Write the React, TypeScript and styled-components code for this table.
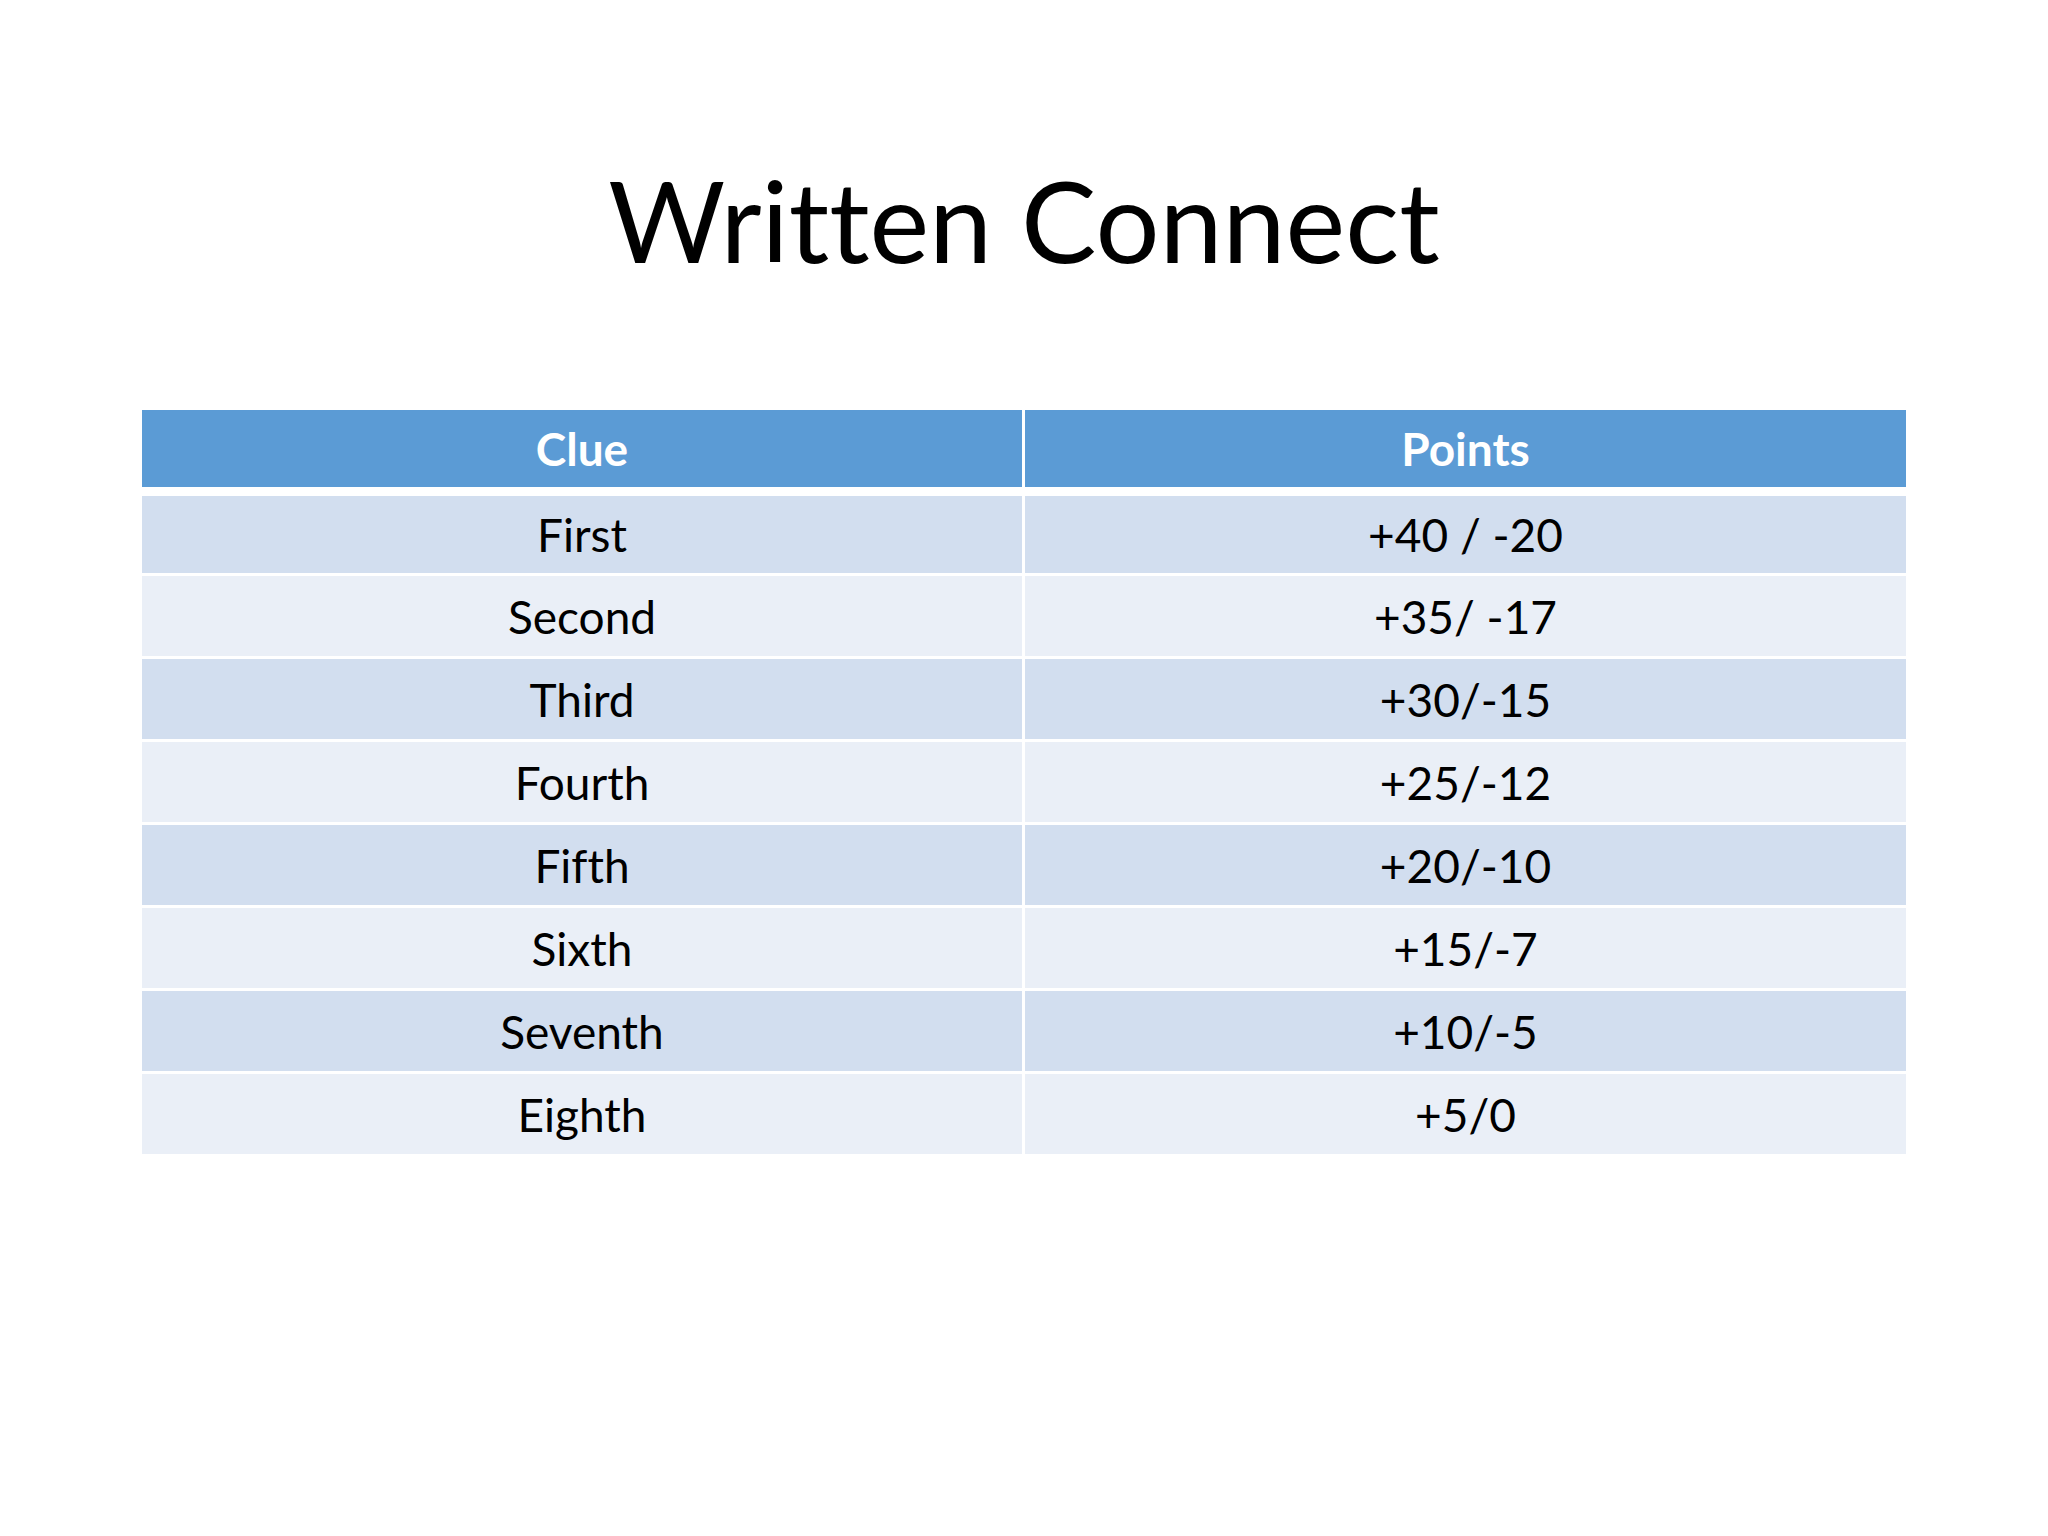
import * as React from 'react';
import styled, {createGlobalStyle} from 'styled-components';

const GlobalStyle = createGlobalStyle`
    html, body {
        margin: 0;
        padding: 0;
        background: #fff;
    }
`;

const Slide = styled.div`
    width: 2048px;
    height: 1536px;
    background: #fff;
    display: flex;
    flex-direction: column;
    align-items: center;
    padding-top: 163px;
    box-sizing: border-box;
    font-family: Lato, "Open Sans", sans-serif;
    font-variant-ligatures: none;
    color: #000;
`;

const Title = styled.h1`
    margin: 0 0 134px;
    font-size: 113px;
    line-height: 113px;
    font-weight: 400;
    white-space: nowrap;
`;

const Table = styled.div`
    width: 1764px;
    display: flex;
    flex-direction: column;
    gap: 3px;
`;

const Row = styled.div<{ $height: number; $bg: string; $gapBelow?: number }>`
    display: grid;
    grid-template-columns: 880px 881px;
    column-gap: 3px;
    height: ${p => p.$height}px;
    margin-bottom: ${p => p.$gapBelow ?? 0}px;

    & > div {
        background: ${p => p.$bg};
    }
`;

const Cell = styled.div<{ $head?: boolean }>`
    display: flex;
    align-items: center;
    justify-content: center;
    font-size: 46px;
    font-weight: ${p => (p.$head ? 700 : 400)};
    color: ${p => (p.$head ? '#fff' : '#000')};
`;

const rows: [string, string][] = [
    ['First', '+40 / -20'],
    ['Second', '+35/ -17'],
    ['Third', '+30/-15'],
    ['Fourth', '+25/-12'],
    ['Fifth', '+20/-10'],
    ['Sixth', '+15/-7'],
    ['Seventh', '+10/-5'],
    ['Eighth', '+5/0'],
];

const App = () => {
    return (
        <Slide>
            <GlobalStyle />
            <Title>Written Connect</Title>
            <Table>
                <Row $height={77} $bg="#5b9bd5" $gapBelow={6}>
                    <Cell $head>Clue</Cell>
                    <Cell $head>Points</Cell>
                </Row>
                {rows.map(([clue, points], i) => (
                    <Row
                        key={clue}
                        $height={i === 0 ? 77 : i === 7 ? 80 : 80}
                        $bg={i % 2 === 0 ? '#d2deef' : '#eaeff7'}
                    >
                        <Cell>{clue}</Cell>
                        <Cell>{points}</Cell>
                    </Row>
                ))}
            </Table>
        </Slide>
    );
};

export default App;
